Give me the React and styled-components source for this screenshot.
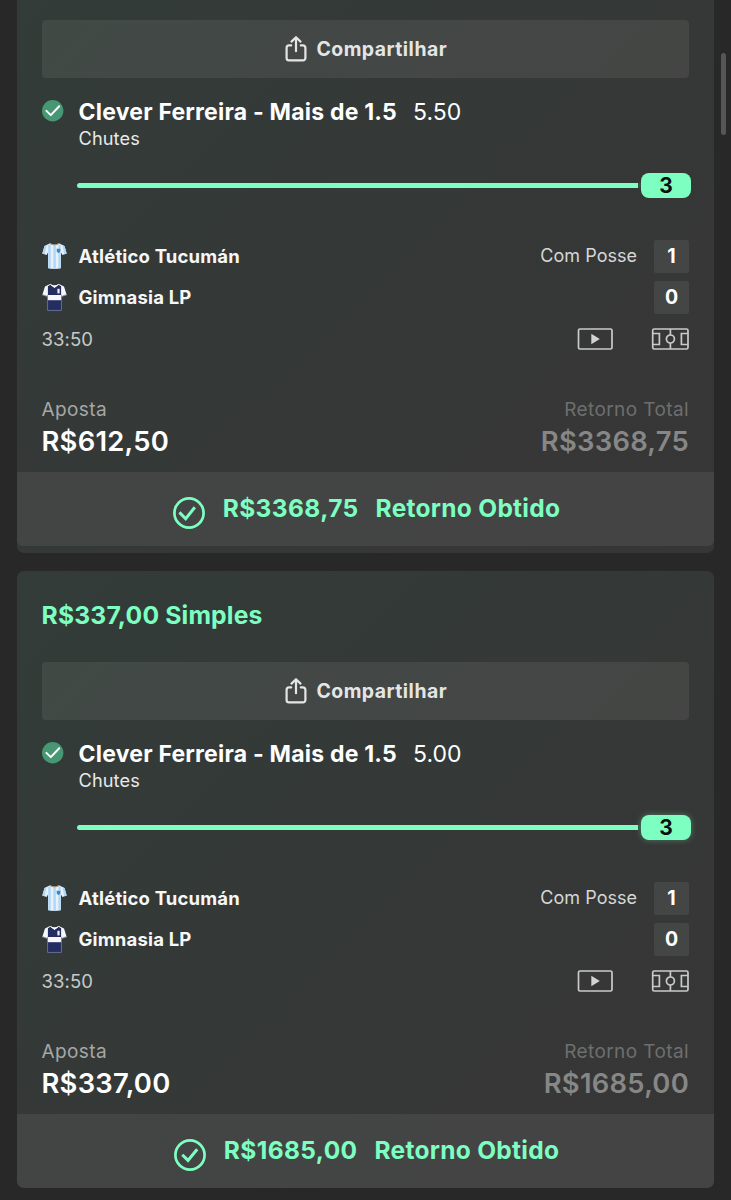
import React from "react";
import styled, { createGlobalStyle } from "styled-components";

const GlobalStyle = createGlobalStyle`
  * {
    box-sizing: border-box;
  }

  body {
    margin: 0;
    background: #282828;
    color: #fff;
    font-family: Inter, "Liberation Sans", sans-serif;
    -webkit-font-smoothing: antialiased;
  }
`

const mint = '#7dffc1'

const Page = styled.main`
  position: relative;
  width: 731px;
  height: 1200px;
  padding: 0 17px;
  overflow: hidden;
  display: flex;
  flex-direction: column;
  gap: 18px;
`

const ScrollThumb = styled.div`
  position: absolute;
  top: 53px;
  right: 5px;
  width: 5px;
  height: 82px;
  border-radius: 3px;
  background: #565656;
`

/* the first card is already scrolled past its title */
const Card = styled.article`
  flex: none;
  width: 697px;
  border-radius: 7px;
  background: linear-gradient(135deg, #323c38 0%, #343937 40%, #363736 75%, #363636 100%);
  margin-top: ${(props) => props.$scrolled ? '-71px' : '0'};
  padding-bottom: ${(props) => props.$scrolled ? '7px' : '0'};
  overflow: hidden;
`

const CardBody = styled.div`
  height: 543px;
  padding: 0 25px 0 24.5px;
  display: flex;
  flex-direction: column;
`

const CardTitle = styled.h2`
  margin: 0;
  height: 91px;
  padding-top: 29px;
  font-size: 24.7px;
  line-height: 30px;
  font-weight: 650;
  letter-spacing: 0.17px;
  color: ${mint};
`

const ShareButton = styled.button`
  height: 58px;
  flex: none;
  display: flex;
  align-items: center;
  justify-content: center;
  gap: 9px;
  padding: 0 0 0 2px;
  border: 0;
  border-radius: 4px;
  background: rgba(255, 255, 255, 0.075);
  color: #e4e6e5;
  font-family: inherit;
  font-size: 19.4px;
  font-weight: 700;
  letter-spacing: 0.5px;
`

const Selection = styled.div`
  display: grid;
  grid-template-columns: 37px 1fr;
  margin-top: 20px;
  height: 54px;
  flex: none;
`

const Status = styled.div`
  padding-top: 2px;

  svg {
    display: block;
  }
`

const SelectionName = styled.div`
  display: flex;
  gap: 16px;
  font-size: 23px;
  line-height: 28px;
  font-weight: 700;
  letter-spacing: 0.21px;
`

const Odds = styled.span`
  font-weight: 400;
  letter-spacing: 0;
`

const Market = styled.div`
  font-size: 18.2px;
  line-height: 25px;
  color: #e8e9e8;
  letter-spacing: 0.1px;
`

const Progress = styled.div`
  display: flex;
  align-items: center;
  height: 25px;
  margin: 21px -2px 0 35px;
  flex: none;
`

const Bar = styled.div`
  flex: 1;
  height: 5px;
  border-right: 3px solid #2c5244;
  border-radius: 3px 0 0 3px;
  background: ${mint};
  background-clip: padding-box;
`

const Count = styled.div`
  width: 50px;
  height: 25px;
  border-radius: 8px;
  background: ${mint};
  color: #0b0f0d;
  font-size: 21px;
  line-height: 26px;
  font-weight: 700;
  text-align: center;
  box-shadow: ${(props) => props.$glow ? '0 0 6px rgba(125, 255, 193, 0.35)' : 'none'};
`

const Teams = styled.div`
  display: flex;
  flex-direction: column;
  gap: 8px;
  margin-top: 42px;
  flex: none;
`

const TeamRow = styled.div`
  display: flex;
  align-items: center;
  height: 33px;

  svg {
    display: block;
    width: 25px;
    height: 28px;
    margin: 0 12px 2px 0;
  }
`

const TeamName = styled.span`
  padding-bottom: 2px;
  font-size: 18.5px;
  font-weight: 700;
  letter-spacing: 0.18px;
  color: #f6f7f6;
`

const Possession = styled.span`
  margin-left: auto;
  padding-bottom: 2px;
  font-size: 18px;
  letter-spacing: 0.02px;
  color: #d6d7d6;
`

const Score = styled.span`
  width: 35px;
  height: 33px;
  margin-left: ${(props) => props.$alone ? 'auto' : '17px'};
  border-radius: 2px;
  background: #444646;
  font-size: 19.5px;
  line-height: 33px;
  font-weight: 700;
  text-align: center;
`

const MatchRow = styled.div`
  display: flex;
  align-items: center;
  height: 24px;
  margin-top: 13px;
  flex: none;
`

const Clock = styled.span`
  flex: 1;
  font-size: 18.5px;
  letter-spacing: 0.1px;
  color: #c8c9c8;
`

const MatchIcons = styled.div`
  display: flex;
  gap: 38px;

  svg {
    display: block;
  }
`

const Stakes = styled.div`
  display: flex;
  justify-content: space-between;
  margin-top: 46px;
`

const Stake = styled.div`
  text-align: ${(props) => props.$right ? 'right' : 'left'};
`

const StakeLabel = styled.div`
  font-size: 19px;
  line-height: 26px;
  letter-spacing: 0.4px;
  color: ${(props) => props.$faded ? '#6d6f6e' : '#a5a7a6'};
`

const StakeValue = styled.div`
  font-size: 27.4px;
  line-height: 36px;
  font-weight: 600;
  letter-spacing: 0.25px;
  color: ${(props) => props.$faded ? '#868786' : '#fff'};
`

const Payout = styled.footer`
  display: flex;
  align-items: center;
  justify-content: center;
  height: 74px;
  padding: 0 0 2px 2px;
  border-radius: 0 0 6px 6px;
  background: linear-gradient(110deg, #424544, #444444 60%);
  color: ${mint};
  font-size: 24.5px;
  line-height: 30px;
  font-weight: 650;

  svg {
    display: block;
    margin: 10px 18px 0 0;
  }
`

const PayoutValue = styled.span`
  letter-spacing: 0.4px;
  margin-right: 17px;
`

const PayoutText = styled.span`
  letter-spacing: 0.28px;
`

const ShareIcon = () => (
  <svg width="22" height="26" viewBox="0 0 22 26" fill="none" stroke="currentColor" strokeWidth="2.2" strokeLinecap="round" strokeLinejoin="round">
    <path d="M6.2 9.4H4A2.4 2.4 0 0 0 1.6 11.8V22A2.4 2.4 0 0 0 4 24.4H18A2.4 2.4 0 0 0 20.4 22V11.8A2.4 2.4 0 0 0 18 9.4H15.8" />
    <path d="M11 15.2V1.4M6.5 5.6L11 1.2L15.5 5.6" />
  </svg>
)

const WonDot = () => (
  <svg width="22" height="22" viewBox="0 0 22 22" fill="none">
    <circle cx="10.7" cy="10.7" r="10.7" fill="#479775" />
    <path d="M4.4 10.9L8.8 15.1L17.2 6.2" stroke="#fff" strokeWidth="2" strokeLinecap="round" strokeLinejoin="round" />
  </svg>
)

const WonRing = ({ shift }) => (
  <svg width="32" height="32" viewBox="0 0 32 32" fill="none" stroke={mint} strokeWidth="2.7">
    <circle cx="16" cy="16" r="14.6" />
    <path d={shift ? "M6.4 15.4L12.7 21.8L21.8 10.3" : "M8.3 15.7L14 21.4L23.2 10.3"} strokeWidth="3" />
  </svg>
)

const StripedShirt = () => (
  <svg viewBox="0 0 25 28">
    <path d="M7.5 1.5L2.5 4L.3 11.5L4.6 13L6 10.5V26Q12.5 28 19 26V10.5L20.4 13L24.7 11.5L22.5 4L17.5 1.5Q12.5 4 7.5 1.5Z" fill="#e6f1fa" />
    <path d="M6.2 2.5H8.8V26.7L6.2 26.2ZM11.3 3.2H13.9V27H11.3ZM16.4 2.2L18.8 2.6V26.2L16.4 26.7ZM2.5 4L4.6 3.3L2.8 12.3L.3 11.5ZM22.5 4L20.4 3.3L22.2 12.3L24.7 11.5Z" fill="#b3d8f6" />
    <path d="M7.8 1.3Q12.5 4.6 17.2 1.3" fill="none" stroke="#b39d72" strokeWidth="1" />
    <path d="M14.7 6.7H18.3V9.5L16.5 11.3L14.7 9.5Z" fill="#3f88c5" />
  </svg>
)

const NavyShirt = () => (
  <svg viewBox="0 0 25 28">
    <path d="M8 1L3 3.6L.3 12L4.8 13.6L5.6 11.5V27.2H19.4V11.5L20.2 13.6L24.7 12L22 3.6L17 1Q12.5 3.5 8 1Z" fill="#f7f8fc" />
    <path d="M5.9 3.2L8.4 1.8L12.5 4.8L16.6 1.8L19.1 3.2V12H5.9Z" fill="#242d60" />
    <path d="M5.4 17.2H19.6V27.4H5.4Z" fill="#242d60" />
    <path d="M.6 11.7L4.8 13.2M24.4 11.7L20.2 13.2M5.6 16V27.4H19.4V16" fill="none" stroke="#69729b" strokeWidth=".8" />
    <path d="M8.6 1.5L12.5 4.4L16.4 1.5" fill="none" stroke="#fff" strokeWidth="1" />
    <path d="M15.4 5.8H17.6V10.4H15.4Z" fill="#eef0fa" />
  </svg>
)

const StreamIcon = () => (
  <svg width="36" height="22" viewBox="0 0 36 22" fill="none">
    <rect x="1.5" y="1" width="33.5" height="20" rx="1.5" stroke="#c9caca" strokeWidth="1.7" />
    <path d="M14.3 5.8L22.8 11L14.3 16.2Z" fill="#d2d3d2" />
  </svg>
)

const PitchIcon = () => (
  <svg width="38" height="22" viewBox="0 0 38 22" fill="none" stroke="#c9caca" strokeWidth="1.7">
    <rect x="1.7" y="1" width="35.3" height="20" rx="1.5" />
    <path d="M1.7 5.5H8.4V16.5H1.7M37 5.5H30.4V16.5H37M19.4 1V7M19.4 15V21" />
    <circle cx="19.4" cy="11" r="4" />
  </svg>
)

const bets = [
  { stake: 'R$612,50', total: 'R$3368,75', odds: '5.50', scrolled: true },
  { stake: 'R$337,00', total: 'R$1685,00', odds: '5.00', scrolled: false },
]

const BetCard = ({ bet }) => (
  <Card $scrolled={bet.scrolled}>
    <CardBody>
      <CardTitle>{bet.scrolled ? '' : `${bet.stake} Simples`}</CardTitle>
      <ShareButton><ShareIcon />Compartilhar</ShareButton>
      <Selection>
        <Status><WonDot /></Status>
        <div>
          <SelectionName>Clever Ferreira - Mais de 1.5 <Odds>{bet.odds}</Odds></SelectionName>
          <Market>Chutes</Market>
        </div>
      </Selection>
      <Progress>
        <Bar />
        <Count $glow={!bet.scrolled}>3</Count>
      </Progress>
      <Teams>
        <TeamRow>
          <StripedShirt />
          <TeamName>Atlético Tucumán</TeamName>
          <Possession>Com Posse</Possession>
          <Score>1</Score>
        </TeamRow>
        <TeamRow>
          <NavyShirt />
          <TeamName>Gimnasia LP</TeamName>
          <Score $alone>0</Score>
        </TeamRow>
      </Teams>
      <MatchRow>
        <Clock>33:50</Clock>
        <MatchIcons><StreamIcon /><PitchIcon /></MatchIcons>
      </MatchRow>
      <Stakes>
        <Stake>
          <StakeLabel>Aposta</StakeLabel>
          <StakeValue>{bet.stake}</StakeValue>
        </Stake>
        <Stake $right>
          <StakeLabel $faded>Retorno Total</StakeLabel>
          <StakeValue $faded>{bet.total}</StakeValue>
        </Stake>
      </Stakes>
    </CardBody>
    <Payout>
      <WonRing shift={bet.scrolled} />
      <PayoutValue>{bet.total}</PayoutValue>
      <PayoutText>Retorno Obtido</PayoutText>
    </Payout>
  </Card>
)

const App = () => (
  <>
    <GlobalStyle />
    <Page>
      {bets.map((bet) => (
        <BetCard key={bet.stake} bet={bet} />
      ))}
      <ScrollThumb />
    </Page>
  </>
);

export default App;
